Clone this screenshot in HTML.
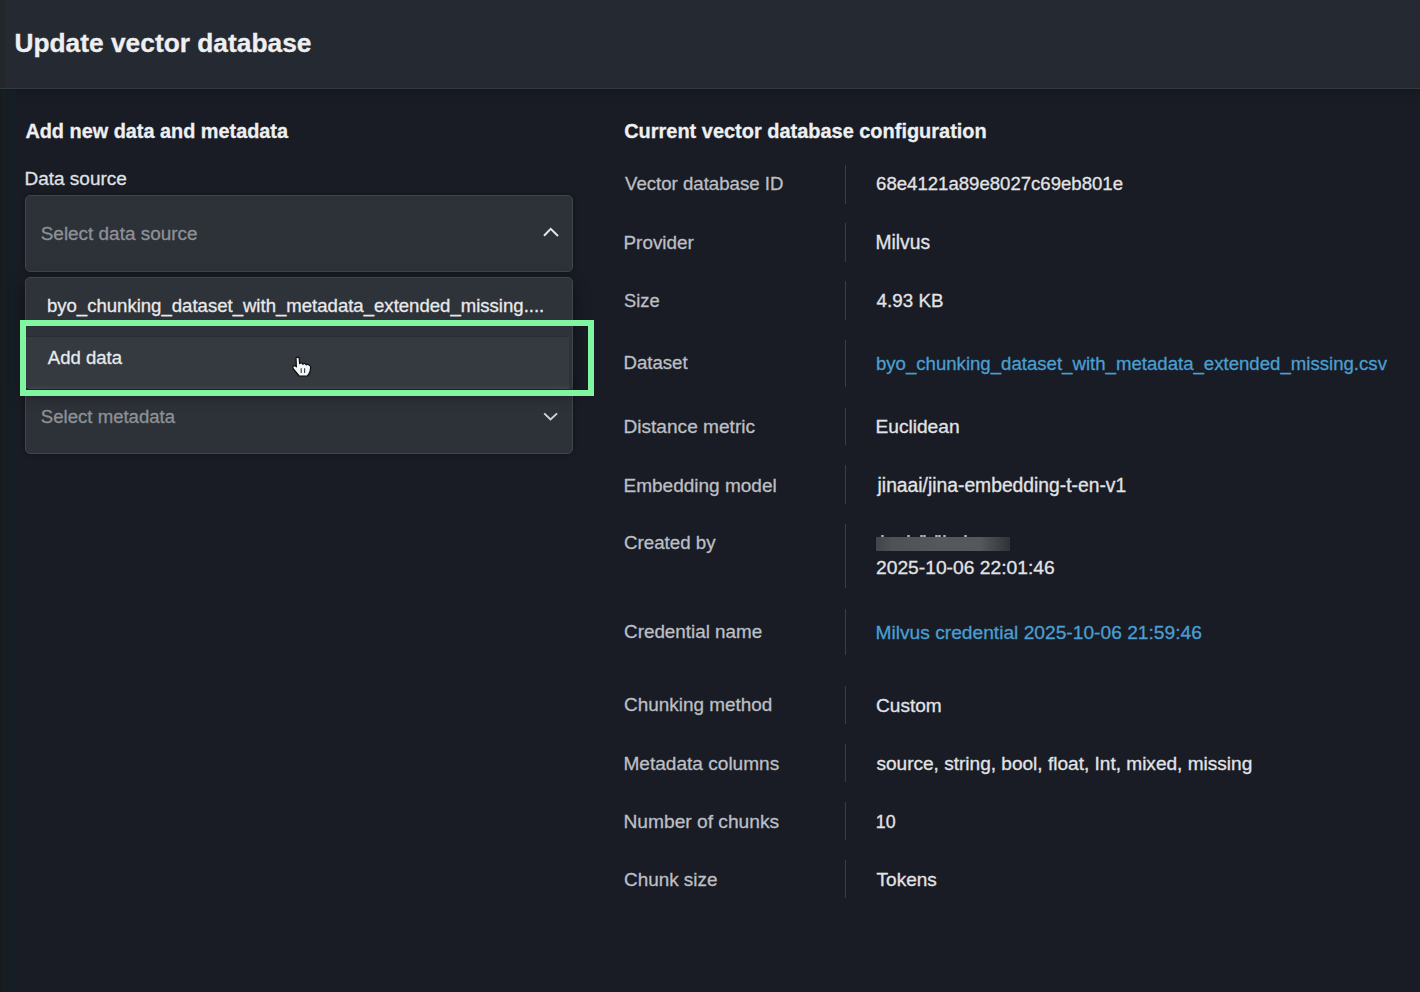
<!DOCTYPE html>
<html>
<head>
<meta charset="utf-8">
<style>
html,body{margin:0;padding:0;}
body{width:1420px;height:992px;overflow:hidden;background:#191c24;font-family:"Liberation Sans",sans-serif;position:relative;color:#e6e7e9;}
.a{position:absolute;white-space:nowrap;line-height:1;-webkit-text-stroke:0.3px currentColor;}
#hdr{position:absolute;left:0;top:0;width:1420px;height:88px;background:#252a32;border-bottom:1px solid #34383f;box-shadow:0 3px 10px rgba(0,0,0,.22);}
#ledge{position:absolute;left:0;top:90px;width:16px;height:902px;background:linear-gradient(90deg,#161c1d 0,#161c1d 2px,#181c23 2px,#181c23 6px,#131d23 6px,#141e24 14px,#181c24 16px);}
#ledge2{position:absolute;left:0;top:0;width:5px;height:88px;background:#23272b;}
.title{font-weight:700;color:#eeeff1;}
.h2{font-weight:700;color:#eeeff1;}
.lbl{color:#dfe1e4;}
.box{position:absolute;left:25px;width:546px;background:#2d3239;border:1px solid #40444b;border-radius:5px;box-shadow:0 0 4px rgba(0,0,0,.35);}
.menu{background:#2e3239;box-shadow:0 6px 16px rgba(0,0,0,.45);}
.hl{position:absolute;left:26px;top:336px;width:543px;height:49px;background:#353940;border-top:1px solid #2a2e34;border-bottom:2px solid #3b3f45;}
.ph{color:#8d9197;}
.opt{color:#e8e9eb;}
.k{color:#bcbfc4;}
.v{color:#e2e3e6;}
.lnk{color:#4a9fd2;}
.dv{position:absolute;left:845px;width:1px;background:#3a3e45;}
.chev{position:absolute;}
.blur{position:absolute;left:876px;top:537px;width:134px;height:14px;background:linear-gradient(90deg,#414448 0%,#4e5156 12%,#55585d 50%,#54575c 78%,#2f3238 100%);}
.sp{position:absolute;top:535px;width:3px;height:2px;background:#aeb1b5;border-radius:1px;}
#green{position:absolute;left:20px;top:320px;width:562px;height:64px;border:6px solid #80f6a0;}

</style>
</head>
<body>
<div id="hdr"></div>
<div id="ledge"></div>
<div id="ledge2"></div>
<div class="a title" style="left:14.42px;top:29.92px;font-size:26.33px;">Update vector database</div>

<!-- Left panel -->
<div class="a h2" style="left:25.40px;top:122.40px;font-size:19.88px;">Add new data and metadata</div>
<div class="a lbl" style="left:24.48px;top:169.05px;font-size:18.99px;">Data source</div>

<div class="box" style="top:195px;height:75px;"></div>
<div class="a ph" style="left:40.75px;top:224.61px;font-size:18.93px;">Select data source</div>
<svg class="chev" style="left:541px;top:225px;" width="18" height="14" viewBox="0 0 18 14"><path d="M3 10.8 L9.7 3.8 L17 11" fill="none" stroke="#e4e5e8" stroke-width="2"/></svg>

<div class="box" style="top:380px;height:72px;"></div>
<div class="a ph" style="left:40.87px;top:407.51px;font-size:18.58px;">Select metadata</div>
<svg class="chev" style="left:541px;top:409px;" width="18" height="14" viewBox="0 0 18 14"><path d="M3.2 4.4 L9.5 10.4 L16.1 4.4" fill="none" stroke="#d2d4d8" stroke-width="1.9"/></svg>

<div class="box menu" style="top:277px;height:110px;"></div>
<div class="a opt" style="left:46.89px;top:297.02px;font-size:18.57px;">byo_chunking_dataset_with_metadata_extended_missing....</div>
<div class="hl"></div>
<div class="a opt" style="left:47.80px;top:349.05px;font-size:18.53px;">Add data</div>
<svg style="position:absolute;left:290px;top:354px;" width="24" height="26" viewBox="0 0 24 26"><path d="M6.0 4.0 Q7.6 2.3 9.2 4.2 L9.6 9.6 Q11.2 8.0 12.6 9.8 L12.8 10.4 Q14.4 8.6 15.9 10.3 L16.1 10.9 Q17.6 9.6 19.2 11.2 Q20.8 11.8 20.6 13.4 L20.2 17 Q19.4 20 17.4 22 L9.2 22 L3.4 15 Q2.2 13 3.4 12 Q4.8 11 6.4 12.8 Z" fill="#f4f5f6" stroke="#0d0f12" stroke-width="1.2" stroke-linejoin="round"/><path d="M11.2 14.2 L11.2 19 M14.6 14.2 L14.6 19" stroke="#3a3d42" stroke-width="1.1"/></svg>
<div id="green"></div>

<!-- Right panel -->
<div class="a h2" style="left:624.20px;top:122.33px;font-size:19.97px;">Current vector database configuration</div>
<div class="a k" style="left:625.00px;top:174.76px;font-size:18.64px;">Vector database ID</div>
<div class="dv" style="top:165px;height:39px;"></div>
<div class="a v" style="left:876.07px;top:174.91px;font-size:18.58px;">68e4121a89e8027c69eb801e</div>
<div class="a k" style="left:623.49px;top:233.74px;font-size:18.90px;">Provider</div>
<div class="dv" style="top:223px;height:39px;"></div>
<div class="a v" style="left:875.46px;top:233.09px;font-size:19.30px;">Milvus</div>
<div class="a k" style="left:624.08px;top:292.02px;font-size:18.32px;">Size</div>
<div class="dv" style="top:281px;height:39px;"></div>
<div class="a v" style="left:876.62px;top:292.02px;font-size:18.80px;">4.93 KB</div>
<div class="a k" style="left:623.51px;top:354.46px;font-size:18.63px;">Dataset</div>
<div class="dv" style="top:340px;height:47px;"></div>
<div class="a lnk" style="left:875.88px;top:354.87px;font-size:18.62px;">byo_chunking_dataset_with_metadata_extended_missing.csv</div>
<div class="a k" style="left:623.47px;top:417.36px;font-size:19.10px;">Distance metric</div>
<div class="dv" style="top:408px;height:37px;"></div>
<div class="a v" style="left:875.47px;top:417.22px;font-size:19.15px;">Euclidean</div>
<div class="a k" style="left:623.48px;top:475.63px;font-size:19.03px;">Embedding model</div>
<div class="dv" style="top:465px;height:39px;"></div>
<div class="a v" style="left:877.58px;top:475.89px;font-size:19.30px;">jinaai/jina-embedding-t-en-v1</div>
<div class="a k" style="left:624.06px;top:533.89px;font-size:18.72px;">Created by</div>
<div class="dv" style="top:524px;height:64px;"></div>
<div class="blur"></div>
<div class="sp" style="left:881px"></div><div class="sp" style="left:907px"></div><div class="sp" style="left:920px"></div><div class="sp" style="left:923px"></div><div class="sp" style="left:935px"></div><div class="sp" style="left:938px"></div><div class="sp" style="left:943px"></div><div class="sp" style="left:964px"></div>
<div class="a v" style="left:876.04px;top:558.25px;font-size:19.24px;">2025-10-06 22:01:46</div>
<div class="a k" style="left:624.06px;top:622.80px;font-size:18.83px;">Credential name</div>
<div class="dv" style="top:609px;height:46px;"></div>
<div class="a lnk" style="left:875.46px;top:622.77px;font-size:19.21px;">Milvus credential 2025-10-06 21:59:46</div>
<div class="a k" style="left:624.05px;top:695.71px;font-size:18.92px;">Chunking method</div>
<div class="dv" style="top:686px;height:38px;"></div>
<div class="a v" style="left:876.05px;top:696.09px;font-size:19.07px;">Custom</div>
<div class="a k" style="left:623.47px;top:754.09px;font-size:19.07px;">Metadata columns</div>
<div class="dv" style="top:744px;height:38px;"></div>
<div class="a v" style="left:876.43px;top:754.40px;font-size:19.06px;">source, string, bool, float, Int, mixed, missing</div>
<div class="a k" style="left:623.46px;top:812.47px;font-size:19.21px;">Number of chunks</div>
<div class="dv" style="top:802px;height:38px;"></div>
<div class="a v" style="left:875.75px;top:813.87px;font-size:17.80px;">10</div>
<div class="a k" style="left:624.06px;top:870.75px;font-size:18.89px;">Chunk size</div>
<div class="dv" style="top:860px;height:38px;"></div>
<div class="a v" style="left:876.62px;top:870.45px;font-size:19.00px;">Tokens</div>
</body>
</html>
